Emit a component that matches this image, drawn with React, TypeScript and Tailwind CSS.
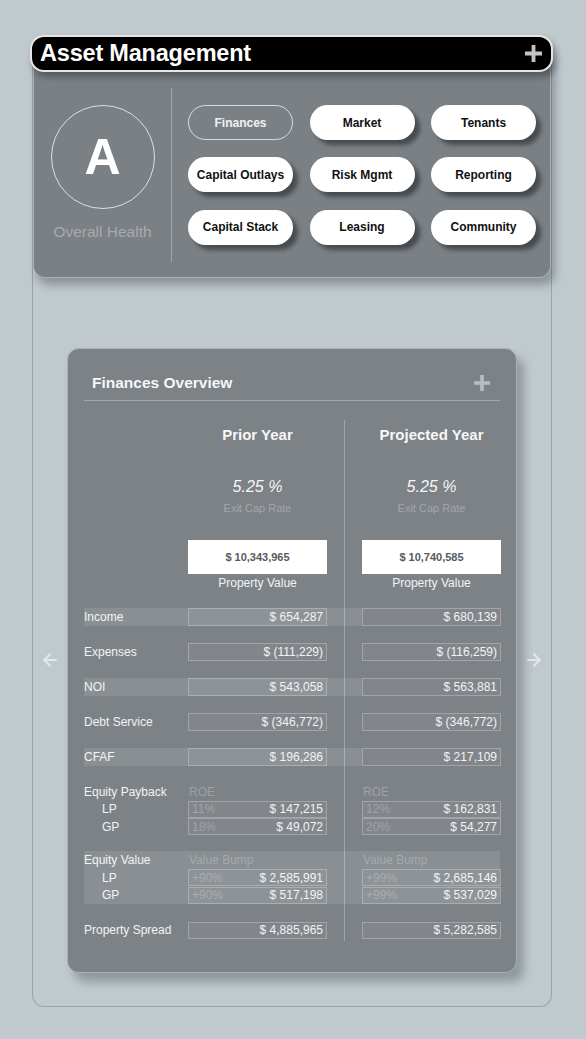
import React from "react";
import { ArrowLeft, ArrowRight } from "lucide-react";

/* --------------------------------------------------------------------------
   Data
   -------------------------------------------------------------------------- */

const PILLS = [
  "Finances",
  "Market",
  "Tenants",
  "Capital Outlays",
  "Risk Mgmt",
  "Reporting",
  "Capital Stack",
  "Leasing",
  "Community",
];

const MAIN_ROWS: { label: string; prior: string; projected: string; band?: boolean }[] = [
  { label: "Income", prior: "$ 654,287", projected: "$ 680,139", band: true },
  { label: "Expenses", prior: "$ (111,229)", projected: "$ (116,259)" },
  { label: "NOI", prior: "$ 543,058", projected: "$ 563,881", band: true },
  { label: "Debt Service", prior: "$ (346,772)", projected: "$ (346,772)" },
  { label: "CFAF", prior: "$ 196,286", projected: "$ 217,109", band: true },
];

const COLS = "grid grid-cols-[104px_139px_35px_139px]";

/* --------------------------------------------------------------------------
   Small pieces
   -------------------------------------------------------------------------- */

function PlusIcon({ className }: { className?: string }) {
  return (
    <svg viewBox="0 0 16 16" className={className} fill="currentColor">
      <path d="M6.2 0h3.6v16H6.2z M0 6.2h16v3.6H0z" />
    </svg>
  );
}

function Box({ value, left, h = "h-[18px]" }: { value: string; left?: string; h?: string }) {
  return (
    <div
      className={`${h} border border-white/25 bg-white/[0.04] flex items-center justify-between px-[3px] text-[12px] leading-none`}
    >
      <span className="text-white/25">{left ?? ""}</span>
      <span className="text-white/90">{value}</span>
    </div>
  );
}

function YearHeader({ title, cap, value }: { title: string; cap: string; value: string }) {
  return (
    <div className="flex flex-col items-center">
      <p className="mt-[6px] text-[15px] leading-[18px] font-bold text-white/95">{title}</p>
      <p className="mt-[33px] text-[16px] leading-[20px] italic text-white/95">{cap}</p>
      <p className="mt-[4px] text-[11px] leading-[14px] text-white/30">Exit Cap Rate</p>
      <div className="mt-[25px] w-full h-[34px] bg-white flex items-center justify-center text-[11px] font-bold text-[#555a5e]">
        {value}
      </div>
      <p className="mt-[2px] text-[12px] leading-[14px] text-white/90">Property Value</p>
    </div>
  );
}

function GroupRows({
  title,
  sub,
  rows,
}: {
  title: string;
  sub: string;
  rows: { label: string; pl: string; pv: string; jl: string; jv: string }[];
}) {
  return (
    <>
      <div className={`${COLS} h-[17.5px] items-center text-[12px]`}>
        <span className="text-white/90">{title}</span>
        <span className="pl-[1px] text-white/25">{sub}</span>
        <span />
        <span className="pl-[1px] text-white/25">{sub}</span>
      </div>
      {rows.map((r) => (
        <div key={r.label} className={`${COLS} h-[17.5px] items-center text-[12px]`}>
          <span className="pl-[18px] text-white/90">{r.label}</span>
          <Box value={r.pv} left={r.pl} h="h-[17px]" />
          <span />
          <Box value={r.jv} left={r.jl} h="h-[17px]" />
        </div>
      ))}
    </>
  );
}

/* --------------------------------------------------------------------------
   Finances overview card
   -------------------------------------------------------------------------- */

function FinancesOverview() {
  return (
    <div className="w-[450px] rounded-[12px] border border-[#a9b1b6] bg-[#7d8287] px-4 pt-[25px] pb-[31px] shadow-[7px_9px_10px_rgba(70,80,90,0.4)]">
      <div className="flex items-center justify-between pl-2 pr-[10px]">
        <h2 className="text-[15.5px] leading-[18px] font-bold text-white/95">Finances Overview</h2>
        <PlusIcon className="w-[16px] h-[16px] text-[#b9bdc1]" />
      </div>
      <div className="mt-[8px] border-b border-white/30" />

      <div className="mt-[19px] pb-[2px] bg-[linear-gradient(to_right,transparent_260px,rgba(255,255,255,0.28)_260px,rgba(255,255,255,0.28)_261px,transparent_261px)]">
        <div className={COLS}>
          <span />
          <YearHeader title="Prior Year" cap="5.25 %" value="$ 10,343,965" />
          <span />
          <YearHeader title="Projected Year" cap="5.25 %" value="$ 10,740,585" />
        </div>

        <div className="mt-[9.5px]">
          {MAIN_ROWS.map((r) => (
            <div key={r.label} className={`${COLS} h-[35px] items-center text-[12px]`}>
              <div className={`h-[18px] flex items-center text-white/90 ${r.band ? "bg-white/10" : ""}`}>
                {r.label}
              </div>
              <div className={r.band ? "bg-white/10" : ""}>
                <Box value={r.prior} />
              </div>
              <div className={`h-[18px] ${r.band ? "bg-white/10" : ""}`} />
              <Box value={r.projected} />
            </div>
          ))}
        </div>

        <div className="pt-[8px]">
          <GroupRows
            title="Equity Payback"
            sub="ROE"
            rows={[
              { label: "LP", pl: "11%", pv: "$ 147,215", jl: "12%", jv: "$ 162,831" },
              { label: "GP", pl: "18%", pv: "$ 49,072", jl: "20%", jv: "$ 54,277" },
            ]}
          />
        </div>

        <div className="mt-[16px] bg-white/10">
          <GroupRows
            title="Equity Value"
            sub="Value Bump"
            rows={[
              { label: "LP", pl: "+90%", pv: "$ 2,585,991", jl: "+99%", jv: "$ 2,685,146" },
              { label: "GP", pl: "+90%", pv: "$ 517,198", jl: "+99%", jv: "$ 537,029" },
            ]}
          />
        </div>

        <div className={`${COLS} mt-[17.5px] h-[17.5px] items-center text-[12px]`}>
          <span className="text-white/90">Property Spread</span>
          <Box value="$ 4,885,965" h="h-[17px]" />
          <span />
          <Box value="$ 5,282,585" h="h-[17px]" />
        </div>
      </div>
    </div>
  );
}

/* --------------------------------------------------------------------------
   App
   -------------------------------------------------------------------------- */

export default function App() {
  return (
    <div className="min-h-[1039px] bg-[#c0c9ce] pt-[35px] pl-[30px] font-['Liberation_Sans',Arial,sans-serif]">
      <div className="w-[523px]">
        {/* Header bar */}
        <div className="relative z-10 h-[37px] rounded-[14px] border-2 border-white/90 bg-black flex items-center justify-between pl-[8px] pr-[9px] shadow-[3px_5px_6px_rgba(40,45,50,0.45)]">
          <h1 className="text-[23.5px] leading-none font-bold text-white tracking-[-0.2px]">Asset Management</h1>
          <PlusIcon className="w-[17px] h-[17px] text-[#c4c4c4]" />
        </div>

        {/* Outer frame */}
        <div className="ml-[2px] -mt-[20px] w-[520px] rounded-b-[12px] border border-t-0 border-[#9aa3a9]">
          {/* Top panel */}
          <div className="rounded-b-[12px] border border-t-0 border-[#a9b1b6] bg-[#7b8085] pt-[36px] pb-[15px] flex shadow-[4px_7px_8px_rgba(60,70,80,0.4)]">
            <div className="w-[137px] flex flex-col items-center pt-[17px]">
              <div className="w-[104px] h-[104px] rounded-full border border-white/75 flex items-center justify-center">
                <span className="text-[50px] leading-none font-bold text-white">A</span>
              </div>
              <p className="mt-[14px] text-[15.5px] leading-[18px] text-white/35">Overall Health</p>
            </div>
            <div className="h-[174px] border-l border-white/30" />
            <div className="pl-[16px] py-[17px] grid grid-cols-[105px_105px_105px] gap-x-[16.5px] gap-y-[17px]">
              {PILLS.map((p, i) =>
                i === 0 ? (
                  <div
                    key={p}
                    className="h-[35px] rounded-full border border-white/70 flex items-center justify-center text-[12px] font-bold text-white/90"
                  >
                    {p}
                  </div>
                ) : (
                  <div
                    key={p}
                    className="h-[35px] rounded-full bg-white flex items-center justify-center text-[12px] font-bold text-[#111] shadow-[5px_5px_4px_rgba(35,40,45,0.6)]"
                  >
                    {p}
                  </div>
                ),
              )}
            </div>
          </div>

          {/* Overview with arrows */}
          <div className="flex items-center pt-[70px] pb-[33px]">
            <div className="w-[34px] flex justify-center">
              <ArrowLeft className="w-[20px] h-[20px] text-[#e2e7ea]" strokeWidth={2.5} />
            </div>
            <FinancesOverview />
            <div className="w-[34px] flex justify-center">
              <ArrowRight className="w-[20px] h-[20px] text-[#e2e7ea]" strokeWidth={2.5} />
            </div>
          </div>
        </div>
      </div>
    </div>
  );
}
